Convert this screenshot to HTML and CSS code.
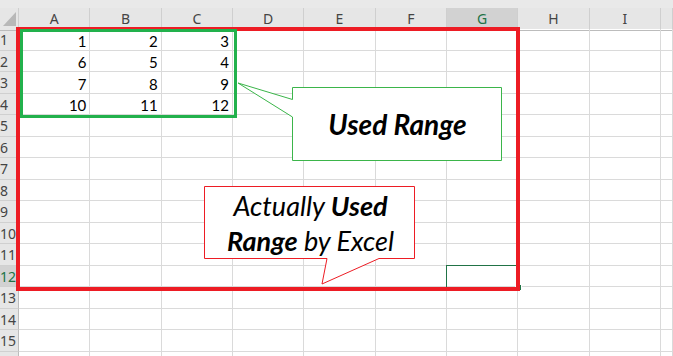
FILE: index.html
```html
<!DOCTYPE html>
<html lang="en">
<head>
    <meta charset="UTF-8">
    <meta name="viewport" content="width=device-width, initial-scale=1.0">
    <title>Used Range</title>
    <link rel="stylesheet" href="styles.css">
</head>
<body>
    <div class="sheet">
        <div class="topbar"></div>
        <div class="row head">
            <div class="corner"><span class="tri"></span></div>
            <div class="ch">A</div><div class="ch">B</div><div class="ch">C</div><div class="ch">D</div><div class="ch">E</div>
            <div class="ch">F</div><div class="ch active">G</div><div class="ch">H</div><div class="ch">I</div><div class="ch"></div>
        </div>
        <div class="row"><div class="rh">1</div><div class="c">1</div><div class="c">2</div><div class="c">3</div><div class="c"></div><div class="c"></div><div class="c"></div><div class="c"></div><div class="c"></div><div class="c"></div><div class="c"></div></div>
        <div class="row"><div class="rh">2</div><div class="c">6</div><div class="c">5</div><div class="c">4</div><div class="c"></div><div class="c"></div><div class="c"></div><div class="c"></div><div class="c"></div><div class="c"></div><div class="c"></div></div>
        <div class="row"><div class="rh">3</div><div class="c">7</div><div class="c">8</div><div class="c">9</div><div class="c"></div><div class="c"></div><div class="c"></div><div class="c"></div><div class="c"></div><div class="c"></div><div class="c"></div></div>
        <div class="row"><div class="rh">4</div><div class="c">10</div><div class="c">11</div><div class="c">12</div><div class="c"></div><div class="c"></div><div class="c"></div><div class="c"></div><div class="c"></div><div class="c"></div><div class="c"></div></div>
        <div class="row"><div class="rh">5</div><div class="c"></div><div class="c"></div><div class="c"></div><div class="c"></div><div class="c"></div><div class="c"></div><div class="c"></div><div class="c"></div><div class="c"></div><div class="c"></div></div>
        <div class="row"><div class="rh">6</div><div class="c"></div><div class="c"></div><div class="c"></div><div class="c"></div><div class="c"></div><div class="c"></div><div class="c"></div><div class="c"></div><div class="c"></div><div class="c"></div></div>
        <div class="row"><div class="rh">7</div><div class="c"></div><div class="c"></div><div class="c"></div><div class="c"></div><div class="c"></div><div class="c"></div><div class="c"></div><div class="c"></div><div class="c"></div><div class="c"></div></div>
        <div class="row"><div class="rh">8</div><div class="c"></div><div class="c"></div><div class="c"></div><div class="c"></div><div class="c"></div><div class="c"></div><div class="c"></div><div class="c"></div><div class="c"></div><div class="c"></div></div>
        <div class="row"><div class="rh">9</div><div class="c"></div><div class="c"></div><div class="c"></div><div class="c"></div><div class="c"></div><div class="c"></div><div class="c"></div><div class="c"></div><div class="c"></div><div class="c"></div></div>
        <div class="row"><div class="rh">10</div><div class="c"></div><div class="c"></div><div class="c"></div><div class="c"></div><div class="c"></div><div class="c"></div><div class="c"></div><div class="c"></div><div class="c"></div><div class="c"></div></div>
        <div class="row"><div class="rh">11</div><div class="c"></div><div class="c"></div><div class="c"></div><div class="c"></div><div class="c"></div><div class="c"></div><div class="c"></div><div class="c"></div><div class="c"></div><div class="c"></div></div>
        <div class="row"><div class="rh active">12</div><div class="c"></div><div class="c"></div><div class="c"></div><div class="c"></div><div class="c"></div><div class="c"></div><div class="c"></div><div class="c"></div><div class="c"></div><div class="c"></div></div>
        <div class="row"><div class="rh">13</div><div class="c"></div><div class="c"></div><div class="c"></div><div class="c"></div><div class="c"></div><div class="c"></div><div class="c"></div><div class="c"></div><div class="c"></div><div class="c"></div></div>
        <div class="row"><div class="rh">14</div><div class="c"></div><div class="c"></div><div class="c"></div><div class="c"></div><div class="c"></div><div class="c"></div><div class="c"></div><div class="c"></div><div class="c"></div><div class="c"></div></div>
        <div class="row"><div class="rh">15</div><div class="c"></div><div class="c"></div><div class="c"></div><div class="c"></div><div class="c"></div><div class="c"></div><div class="c"></div><div class="c"></div><div class="c"></div><div class="c"></div></div>
        <div class="row"><div class="rh"></div><div class="c"></div><div class="c"></div><div class="c"></div><div class="c"></div><div class="c"></div><div class="c"></div><div class="c"></div><div class="c"></div><div class="c"></div><div class="c"></div></div>

        <!-- overlays -->
        <div class="selection"><span class="handle"></span></div>
        <div class="box-excel"></div>
        <div class="box-used"></div>

        <div class="callout callout-green">
            <svg width="268" height="82" viewBox="236 80 268 82">
                <path d="M292.5 87.5 H501.5 V160.5 H292.5 V117 L238 83 L292.5 99.5 Z" fill="#fff" stroke="#3bb54a" stroke-width="1"/>
            </svg>
            <div class="callout-text"><p>Used Range</p></div>
        </div>

        <div class="callout callout-red">
            <svg width="213" height="101" viewBox="203 185 213 101">
                <path d="M204.5 186.5 H414.5 V258.5 H379 L322 284 L327 258.5 H204.5 Z" fill="#fff" stroke="#ed1c24" stroke-width="1"/>
            </svg>
            <div class="callout-text"><p>Actually <b>Used</b><br><b>Range</b> by Excel</p></div>
        </div>
    </div>
</body>
</html>
```

FILE: styles.css
```css
body {
    margin: 0;
    background: #fff;
}
.sheet {
    position: relative;
    width: 673px;
    height: 356px;
    overflow: hidden;
    background: #fff;
    font-family: Lato, "Liberation Sans", sans-serif;
}
.topbar {
    height: 8px;
    background: #e9e9e9;
}
.row {
    display: grid;
    grid-template-columns: 19px repeat(9, 71.33px) 1fr;
    height: 21.53px;
}
.head {
    height: 21px;
    background: #e6e6e6;
}
.corner {
    position: relative;
    border-right: 1px solid #cfcfcf;
    border-bottom: 1px solid #bcbcbc;
}
.tri {
    position: absolute;
    left: 3px;
    top: 4px;
    width: 0;
    height: 0;
    border-left: 13px solid transparent;
    border-bottom: 14px solid #b8b8b8;
}
.ch {
    border-right: 1px solid #cfcfcf;
    border-bottom: 1px solid #bcbcbc;
    text-align: center;
    font-family: "Noto Sans", "Open Sans", sans-serif;
    font-size: 14px;
    line-height: 22px;
    color: #444;
}
.ch.active {
    background: #d2d2d2;
    color: #217346;
}
.rh {
    box-sizing: border-box;
    background: #e6e6e6;
    border-right: 1px solid #bcbcbc;
    border-bottom: 1px solid #d0d0d0;
    font-family: "Noto Sans", "Open Sans", sans-serif;
    font-size: 14px;
    line-height: 22px;
    color: #444;
    white-space: nowrap;
    overflow: hidden;
}
.rh.active {
    background: #d2d2d2;
    color: #217346;
}
.c {
    box-sizing: border-box;
    display: flex;
    align-items: flex-end;
    justify-content: flex-end;
    padding-right: 3px;
    border-right: 1px solid #dadada;
    border-bottom: 1px solid #dadada;
    font-size: 15px;
    line-height: 17px;
    color: #000;
}
.selection {
    position: absolute;
    left: 446px;
    top: 265px;
    width: 74px;
    height: 24px;
    box-sizing: border-box;
    border: 1px solid #217346;
}
.handle {
    position: absolute;
    right: -3px;
    bottom: -3px;
    width: 5px;
    height: 5px;
    background: #217346;
    border: 1px solid #fff;
}
.box-excel {
    position: absolute;
    left: 16px;
    top: 27px;
    width: 504px;
    height: 264px;
    box-sizing: border-box;
    border: 4px solid #ed1c24;
}
.box-used {
    position: absolute;
    left: 20px;
    top: 29px;
    width: 217px;
    height: 89px;
    box-sizing: border-box;
    border: 3px solid #22b14c;
}
.callout {
    position: absolute;
}
.callout svg {
    display: block;
}
.callout-green {
    left: 236px;
    top: 80px;
}
.callout-red {
    left: 203px;
    top: 185px;
}
.callout-text {
    position: absolute;
    display: flex;
    align-items: center;
    justify-content: center;
    text-align: center;
    font-style: italic;
    color: #000;
}
.callout-text p {
    margin: 0;
}
.callout-green .callout-text {
    left: 57px;
    top: 8px;
    width: 209px;
    height: 72px;
    font-size: 28px;
    font-weight: 700;
}
.callout-red .callout-text {
    left: 2px;
    top: 2px;
    width: 211px;
    height: 71px;
    font-size: 27px;
    line-height: 35px;
}
.callout-red b {
    font-weight: 700;
}
```
